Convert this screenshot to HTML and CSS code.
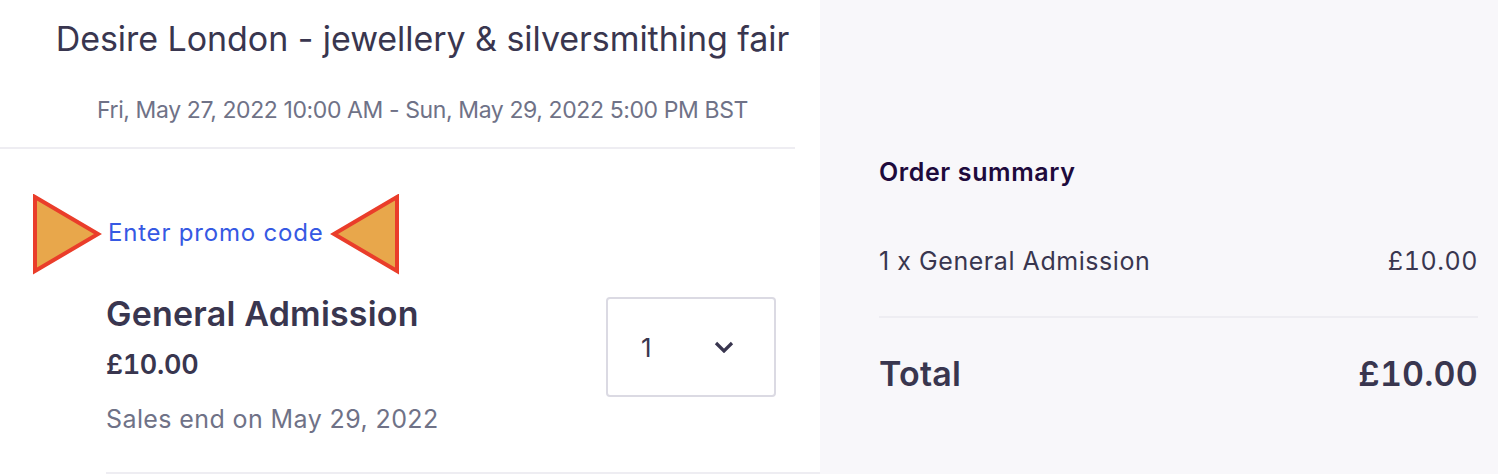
FILE: index.html
```html
<!DOCTYPE html>
<html lang="en">
<head>
  <meta charset="UTF-8" />
  <title>Checkout - Desire London</title>
  <link rel="stylesheet" href="styles.css">
</head>
<body>

<div class="page">
  <div class="main">
    <div class="event-header">
      <h1 class="event-title">Desire London - jewellery &amp; silversmithing fair</h1>
      <div class="event-date">Fri, May 27, 2022 10:00 AM - Sun, May 29, 2022 5:00 PM BST</div>
    </div>

    <div class="tickets">
      <div class="promo">
        <!-- annotation arrows -->
        <svg class="pointer pointer-left" width="72" height="82" viewBox="0 0 72 82">
          <polygon points="3,3 66,40 3,77" fill="#e8a74b" stroke="#ea3d2a" stroke-width="4"/>
        </svg>
        <a class="promo-link" href="#">Enter promo code</a>
        <svg class="pointer pointer-right" width="72" height="82" viewBox="0 0 72 82">
          <polygon points="69,3 6,40 69,77" fill="#e8a74b" stroke="#ea3d2a" stroke-width="4"/>
        </svg>
      </div>

      <div class="ticket">
        <div class="ticket-info">
          <div class="ticket-name">General Admission</div>
          <div class="ticket-price price">£10.00</div>
          <div class="ticket-sales">Sales end on May 29, 2022</div>
        </div>
        <div class="qty-select">
          <span class="qty-value">1</span>
          <svg class="chevron" width="20" height="12" viewBox="0 0 20 12">
            <path d="M2 2 L10 10 L18 2" fill="none" stroke="#39364f" stroke-width="3.2"/>
          </svg>
        </div>
      </div>
    </div>
  </div>

  <div class="summary">
    <h2 class="summary-title">Order summary</h2>
    <div class="summary-row">
      <span>1 x General Admission</span>
      <span class="price">£10.00</span>
    </div>
    <div class="summary-total">
      <span>Total</span>
      <span class="price">£10.00</span>
    </div>
  </div>
</div>

</body>
</html>
```

FILE: styles.css
```css
* { box-sizing: border-box; margin: 0; padding: 0; }
body {
  font-family: Inter, "Liberation Sans", sans-serif;
  color: #39364f;
  background: #fff;
  overflow: hidden;
}
.page {
  display: flex;
  height: 474px;
}
.main {
  width: 820px;
  flex-shrink: 0;
}
.price {
  font-variant-numeric: tabular-nums;
}
.event-header {
  width: 795px;
  height: 149px;
  padding: 17px 0 0 50px;
  border-bottom: 2px solid #eeedf2;
  text-align: center;
}
.event-title {
  font-size: 34px;
  font-weight: 400;
  line-height: 44px;
  letter-spacing: -0.05px;
  color: #39364f;
}
.event-date {
  margin-top: 34px;
  font-size: 23px;
  line-height: 30px;
  letter-spacing: -0.4px;
  color: #6f7287;
}
.tickets {
  margin-left: 106px;
  height: 325px;
  border-bottom: 2px solid #eeedf2;
}
.promo {
  position: relative;
  padding-top: 69px;
}
.promo-link {
  font-size: 24px;
  line-height: 30px;
  letter-spacing: 0.8px;
  color: #3659e3;
  text-decoration: none;
  margin-left: 2px;
}
.pointer {
  position: absolute;
  top: 45px;
}
.pointer-left { left: -74px; }
.pointer-right { left: 222px; }
.ticket {
  display: flex;
  justify-content: space-between;
  align-items: flex-start;
  margin-top: 46px;
  padding-right: 44px;
}
.ticket-name {
  font-size: 34px;
  font-weight: 600;
  line-height: 40px;
  letter-spacing: 0.2px;
}
.ticket-price {
  margin-top: 15px;
  font-size: 27px;
  font-weight: 600;
  line-height: 32px;
  letter-spacing: -0.3px;
}
.ticket-sales {
  margin-top: 22px;
  font-size: 25px;
  line-height: 32px;
  letter-spacing: 0.4px;
  color: #6f7287;
}
.qty-select {
  width: 170px;
  height: 100px;
  margin-top: 3px;
  border: 2px solid #dbdae3;
  border-radius: 4px;
  display: flex;
  align-items: center;
  justify-content: space-between;
  padding: 0 40px 0 33px;
}
.qty-value {
  font-size: 26px;
}
.summary {
  flex: 1;
  background: #f8f7fa;
  padding: 155px 20px 0 59px;
}
.summary-title {
  font-size: 25px;
  font-weight: 600;
  line-height: 34px;
  letter-spacing: 0.6px;
  color: #1e0a3c;
}
.summary-row {
  display: flex;
  justify-content: space-between;
  margin-top: 55px;
  padding-bottom: 38px;
  border-bottom: 2px solid #eeedf2;
  font-size: 25px;
  line-height: 34px;
  letter-spacing: 0.55px;
}
.summary-total {
  display: flex;
  justify-content: space-between;
  margin-top: 34px;
  font-size: 34px;
  font-weight: 600;
  line-height: 44px;
  letter-spacing: 0.2px;
}
```
